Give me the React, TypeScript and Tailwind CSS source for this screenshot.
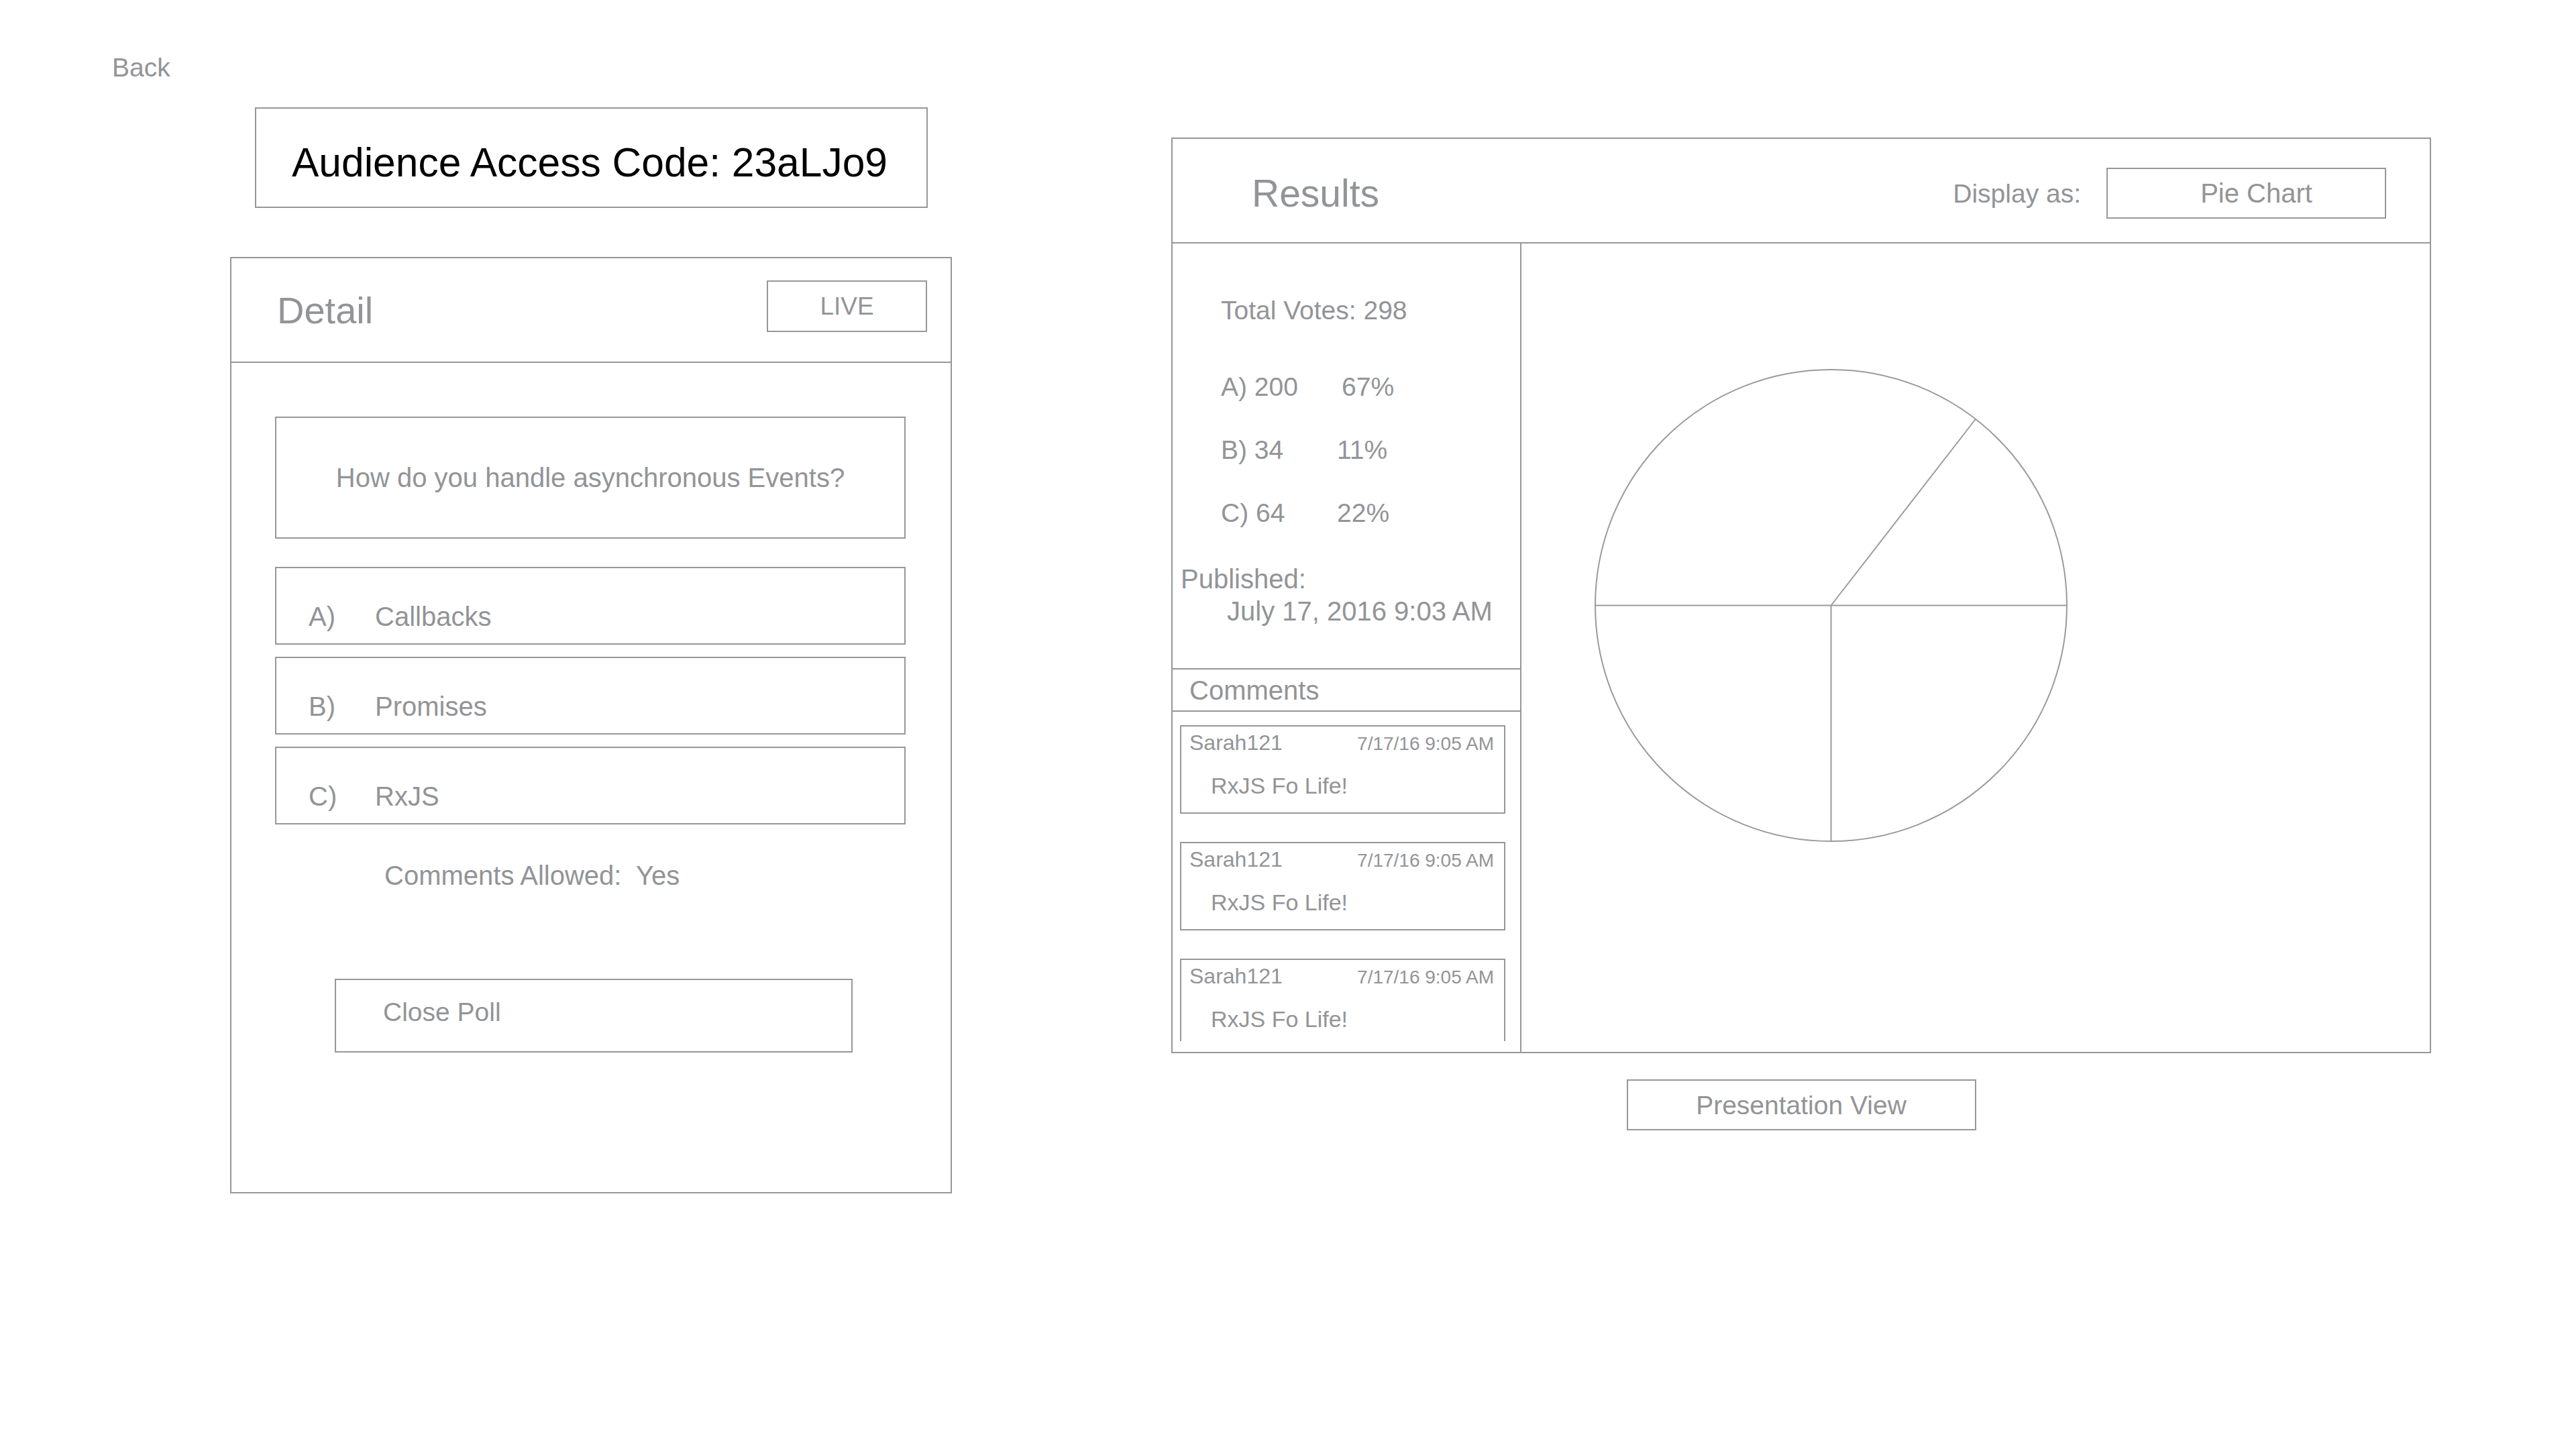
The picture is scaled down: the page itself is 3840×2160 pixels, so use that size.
import React from "react";

const options = [
  { label: "A)", text: "Callbacks" },
  { label: "B)", text: "Promises" },
  { label: "C)", text: "RxJS" },
];

const votes = [
  { label: "A) 200", pct: "67%", pad: "pl-[7px]" },
  { label: "B) 34", pct: "11%", pad: "" },
  { label: "C) 64", pct: "22%", pad: "" },
];

const comments = [
  { user: "Sarah121", time: "7/17/16 9:05 AM", body: "RxJS Fo Life!" },
  { user: "Sarah121", time: "7/17/16 9:05 AM", body: "RxJS Fo Life!" },
  { user: "Sarah121", time: "7/17/16 9:05 AM", body: "RxJS Fo Life!" },
];

function PieChart() {
  // wireframe pie: center 353.5, radius 351.5
  const c = 353.5;
  const r = 351.5;
  const a = (52.2 * Math.PI) / 180;
  return (
    <svg width="707" height="707" viewBox="0 0 707 707" fill="none">
      <circle cx={c} cy={c} r={r} stroke="#9b9b9b" strokeWidth="2" />
      <line x1={c - r} y1={c} x2={c + r} y2={c} stroke="#9b9b9b" strokeWidth="2" />
      <line x1={c} y1={c} x2={c} y2={c + r} stroke="#9b9b9b" strokeWidth="2" />
      <line
        x1={c}
        y1={c}
        x2={c + r * Math.cos(a)}
        y2={c - r * Math.sin(a)}
        stroke="#9b9b9b"
        strokeWidth="2"
      />
    </svg>
  );
}

export default function App() {
  return (
    <div className="w-[3840px] h-[2160px] bg-white text-[#929497] font-['Liberation_Sans',Arial,sans-serif]">
      {/* back link */}
      <div className="pl-[167px] pt-[81px] text-[39px] leading-none">Back</div>

      <div className="flex items-start">
        {/* left column */}
        <div className="ml-[343px] w-[1076px] flex flex-col">
          <div className="mt-[40px] ml-[37px] w-[1003px] h-[150px] border-2 border-[#979797] pl-[53px] pt-[50px] text-[60.5px] leading-none text-black">
            Audience Access Code: 23aLJo9
          </div>

          <div className="mt-[73px] w-[1076px] h-[1396px] border-2 border-[#979797]">
            <div className="h-[156px] border-b-2 border-[#979797] flex justify-between items-start pl-[68px] pr-[35px] pt-[33px]">
              <div className="mt-[17px] text-[56px] leading-none">Detail</div>
              <div className="w-[239px] h-[77px] border-2 border-[#979797] flex items-center justify-center text-[37px] leading-none">
                LIVE
              </div>
            </div>

            <div className="px-[65px]">
              <div className="mt-[80px] w-[940px] h-[182px] border-2 border-[#979797] flex items-center justify-center text-[40px] leading-none">
                How do you handle asynchronous Events?
              </div>

              {options.map((o, i) => (
                <div
                  key={o.label}
                  className={`${i === 0 ? "mt-[42px]" : "mt-[18px]"} w-[940px] h-[116px] border-2 border-[#979797] flex pl-[48px] pt-[52px] text-[40px] leading-none`}
                >
                  <span className="w-[99px]">{o.label}</span>
                  <span>{o.text}</span>
                </div>
              ))}

              <div className="mt-[56px] pl-[163px] text-[40px] leading-none whitespace-pre">
                {"Comments Allowed:  Yes"}
              </div>

              <div className="mt-[134px] ml-[89px] w-[772px] h-[110px] border-2 border-[#979797] pl-[70px] pt-[28px] text-[39px] leading-none">
                Close Poll
              </div>
            </div>
          </div>
        </div>

        {/* right column */}
        <div className="ml-[327px] mt-[85px] w-[1878px] flex flex-col items-center">
          <div className="w-[1878px] h-[1365px] border-2 border-[#979797] flex flex-col">
            <div className="h-[156px] shrink-0 border-b-2 border-[#979797] flex items-center pl-[118px] pr-[65px] pt-[8px]">
              <div className="text-[57px] leading-none">Results</div>
              <div className="ml-auto text-[39px] leading-none">Display as:</div>
              <div className="ml-[38px] w-[417px] h-[76px] border-2 border-[#979797] flex items-center justify-center pl-[30px] text-[40px] leading-none">
                Pie Chart
              </div>
            </div>

            <div className="flex flex-1">
              <div className="w-[520px] border-r-2 border-[#979797] flex flex-col">
                <div className="h-[635px] border-b-2 border-[#979797] pl-[12px] pt-[80px]">
                  <div className="pl-[60px]">
                    <div className="text-[39px] leading-none">Total Votes: 298</div>
                    {votes.map((v, i) => (
                      <div
                        key={v.label}
                        className={`${i === 0 ? "mt-[75px]" : "mt-[55px]"} flex text-[39px] leading-none`}
                      >
                        <span className="w-[173px]">{v.label}</span>
                        <span className={v.pad}>{v.pct}</span>
                      </div>
                    ))}
                  </div>
                  <div className="mt-[59px] text-[40px] leading-none">Published:</div>
                  <div className="mt-[8px] pl-[69px] text-[40px] leading-none">
                    July 17, 2016 9:03 AM
                  </div>
                </div>

                <div className="h-[63px] border-b-2 border-[#979797] flex items-center pl-[25px] text-[40px] leading-none">
                  Comments
                </div>

                <div className="h-[491px] overflow-hidden pt-[20px] pl-[11px]">
                  {comments.map((c, i) => (
                    <div
                      key={i}
                      className={`${i === 0 ? "" : "mt-[42px]"} w-[485px] h-[132px] shrink-0 border-2 border-[#979797]`}
                    >
                      <div className="flex justify-between items-baseline pl-[12px] pr-[15px] pt-[8px]">
                        <span className="text-[32px] leading-none">{c.user}</span>
                        <span className="text-[28px] leading-none">{c.time}</span>
                      </div>
                      <div className="mt-[31px] pl-[44px] text-[34px] leading-none">{c.body}</div>
                    </div>
                  ))}
                </div>
              </div>

              <div className="flex-1">
                <div className="ml-[108px] mt-[186px] w-[707px] h-[707px]">
                  <PieChart />
                </div>
              </div>
            </div>
          </div>

          <div className="mt-[39px] w-[521px] h-[76px] border-2 border-[#979797] flex items-center justify-center text-[39px] leading-none">
            Presentation View
          </div>
        </div>
      </div>
    </div>
  );
}
